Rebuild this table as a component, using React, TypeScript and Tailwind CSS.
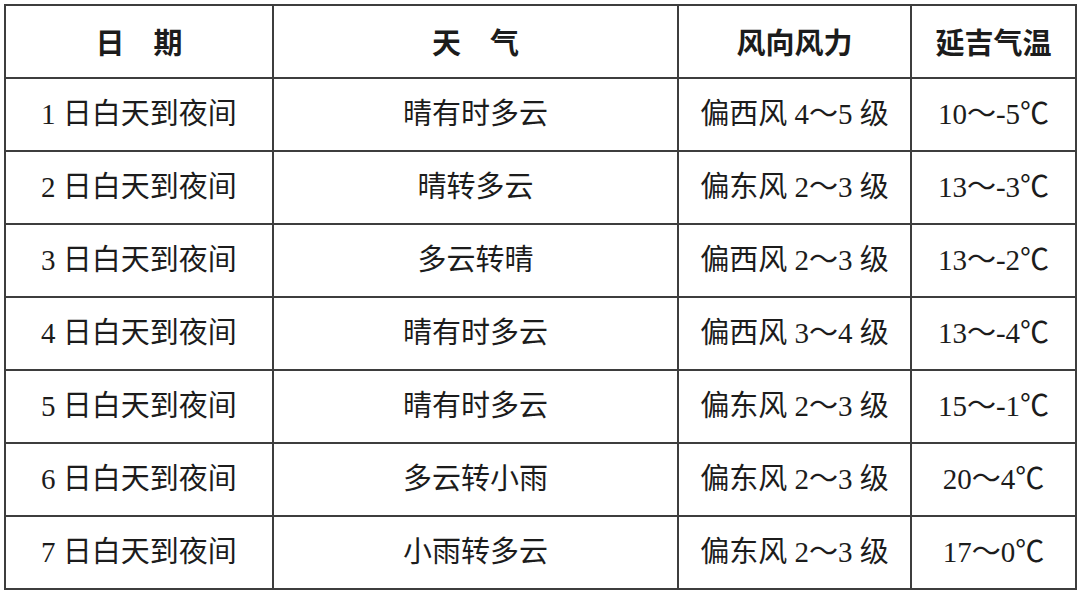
const rows = [
  ["1 日白天到夜间", "晴有时多云", "偏西风 4～5 级", "10～-5℃"],
  ["2 日白天到夜间", "晴转多云", "偏东风 2～3 级", "13～-3℃"],
  ["3 日白天到夜间", "多云转晴", "偏西风 2～3 级", "13～-2℃"],
  ["4 日白天到夜间", "晴有时多云", "偏西风 3～4 级", "13～-4℃"],
  ["5 日白天到夜间", "晴有时多云", "偏东风 2～3 级", "15～-1℃"],
  ["6 日白天到夜间", "多云转小雨", "偏东风 2～3 级", "20～4℃"],
  ["7 日白天到夜间", "小雨转多云", "偏东风 2～3 级", "17～0℃"],
];

const cell = "border-2 border-[#3d3d3d] text-center align-middle h-[73px] p-0";

export default function App() {
  return (
    <div className="w-[1080px] h-[595px] bg-white pt-[4px] pl-[4px] text-[#1c1c1c] [font-family:'Liberation_Serif','Noto_Sans_CJK_SC',serif]">
      <table className="table-fixed border-collapse w-[1071px]">
        <colgroup>
          <col className="w-[268px]" />
          <col className="w-[405px]" />
          <col className="w-[233px]" />
          <col className="w-[165px]" />
        </colgroup>
        <thead>
          <tr className="text-[29px] font-bold [font-family:'Noto_Sans_CJK_SC',sans-serif]">
            <th className={cell}>日　期</th>
            <th className={cell}>天　气</th>
            <th className={cell}>风向风力</th>
            <th className={cell}>延吉气温</th>
          </tr>
        </thead>
        <tbody>
          {rows.map((r, i) => (
            <tr key={i} className="text-[29px]">
              {r.map((c, j) => (
                <td key={j} className={cell}>{c}</td>
              ))}
            </tr>
          ))}
        </tbody>
      </table>
    </div>
  );
}
